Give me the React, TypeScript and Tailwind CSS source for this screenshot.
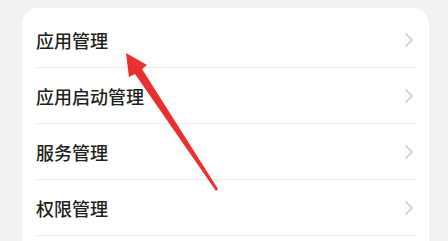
const items = ["应用管理", "应用启动管理", "服务管理", "权限管理"];

const Chevron = () => (
  <svg width="10" height="16" viewBox="0 0 10 16" fill="none" className="shrink-0">
    <path d="M2 2l6 6-6 6" stroke="#c4c5c8" strokeWidth="1.4" strokeLinecap="round" strokeLinejoin="round" />
  </svg>
);

const App = () => {
  return (
    <div
      className="relative h-[241px] w-[448px] overflow-hidden bg-[#f1f2f4] pt-2 pl-[22px] pr-[19px]"
      style={{ fontFamily: '"Noto Sans CJK SC", "Noto Sans", sans-serif' }}
    >
      <div className="rounded-[16px] bg-white pl-[14px] pr-[13px] pt-1 pb-6">
        {items.map((label) => (
          <div
            key={label}
            className="flex h-[56px] items-center justify-between border-b border-[#ececee] pr-[2px]"
          >
            <span className="text-[18px] font-medium leading-none text-[#1f1f21]">{label}</span>
            <Chevron />
          </div>
        ))}
      </div>

      {/* red pointer arrow drawn over the list */}
      <svg className="pointer-events-none absolute inset-0" width="448" height="241" viewBox="0 0 448 241">
        <polygon
          points="126,53 147,65 142,69 218,189 216,191 135,74 129,77"
          fill="#ea2f2f"
        />
      </svg>
    </div>
  );
};

export default App;
